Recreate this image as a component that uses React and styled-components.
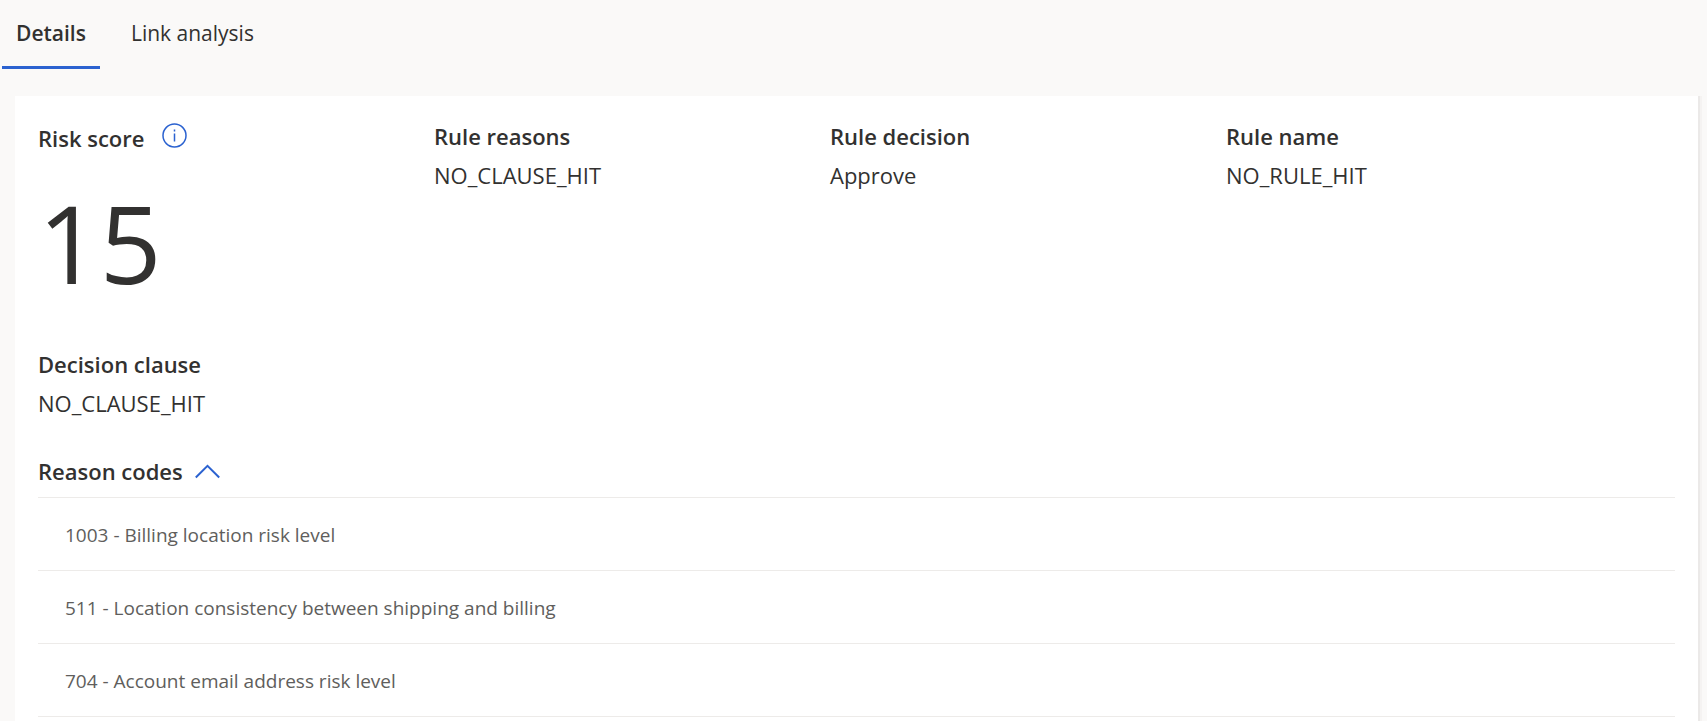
import styled, {createGlobalStyle} from "styled-components";
import {useState} from "react";

const GlobalStyle = createGlobalStyle`
  *{
    box-sizing: border-box;
  }
  body{
    margin: 0;
    background-color: #faf9f8;
    color: #323130;
    font-family: "Open Sans", "Noto Sans", sans-serif;
    font-size: 22px;
    line-height: 30px;
  }
  button{
    font: inherit;
    color: inherit;
    background: none;
    border: 0;
    padding: 0;
    cursor: pointer;
  }
`;

const Page = styled.div`
  display: flex;
  flex-direction: column;
  height: 100vh;
  overflow: hidden;
`;

const Tabs = styled.div`
  display: flex;
  gap: 17px;
  padding: 0 2px;
  margin-bottom: 27px;
`;

const Tab = styled.button`
  && {
    height: 69px;
    padding: 0 14px;
    border-bottom: 3px solid ${props => props.$active ? '#2b62d0' : 'transparent'};
    font-size: 21px;
    font-weight: ${props => props.$active ? 600 : 400};
  }
`;

const Card = styled.main`
  flex: 1;
  margin: 0 9px 0 15px;
  padding: 25px 23px 0;
  background-color: #fff;
  box-shadow: 2px 0 0 #ebe9e8, 4px 0 0 #f5f3f2;
`;

const Fields = styled.div`
  display: grid;
  grid-template-columns: repeat(4, 1fr);
  row-gap: 38px;
  padding-right: 53px;
`;

const Label = styled.h2`
  margin: 0;
  font-size: 22px;
  line-height: 30px;
  font-weight: 600;
`;

const Value = styled.p`
  margin: 9px 0 0;
`;

const ScoreHead = styled.div`
  display: flex;
  align-items: flex-end;
  gap: 18px;
  height: 32px;
  button{
    height: 32px;
    padding-bottom: 4px;
  }
  svg{
    display: block;
  }
`;

const Score = styled.p`
  margin: 22px 0 0;
  font-size: 108px;
  line-height: 136px;
`;

const ReasonToggle = styled.button`
  && {
    display: flex;
    align-items: center;
    gap: 12px;
    margin-top: 38px;
    padding-bottom: 11px;
    font-weight: 600;
  }
`;

const ReasonList = styled.ul`
  list-style: none;
  margin: 0;
  padding: 0;
  border-top: 1px solid #edebe9;
`;

const Reason = styled.li`
  display: flex;
  align-items: center;
  height: 73px;
  padding: 2px 27px 0;
  border-bottom: 1px solid #edebe9;
  color: #605e5c;
  font-size: 19px;
`;

const InfoIcon = () => (
  <svg width="25" height="25" viewBox="0 0 25 25" fill="none" stroke="#2b62d0" strokeWidth="1.5">
    <circle cx="12.5" cy="12.5" r="11.5" />
    <path d="M12.5 10.5v8M12.5 6.5v2" />
  </svg>
);

const ChevronUpIcon = () => (
  <svg width="25" height="15" viewBox="0 0 25 15" fill="none" stroke="#2b62d0" strokeWidth="2">
    <path d="M.8 13.5 12.5 1.8 24.2 13.5" />
  </svg>
);

const reasons = [
  '1003 - Billing location risk level',
  '511 - Location consistency between shipping and billing',
  '704 - Account email address risk level',
];

const Field = ({label, value}) => (
  <section>
    <Label>{label}</Label>
    <Value>{value}</Value>
  </section>
);

export default function App() {
  const [tab, setTab] = useState('Details');
  const [open, setOpen] = useState(true);
  return (
    <Page>
      <GlobalStyle />
      <Tabs role="tablist">
        {['Details', 'Link analysis'].map(name => (
          <Tab
            key={name}
            role="tab"
            aria-selected={tab === name}
            $active={tab === name}
            onClick={() => setTab(name)}
          >
            {name}
          </Tab>
        ))}
      </Tabs>
      <Card>
        <Fields>
          <section>
            <ScoreHead>
              <Label>Risk score</Label>
              <button aria-label="About risk score">
                <InfoIcon />
              </button>
            </ScoreHead>
            <Score>15</Score>
          </section>
          <Field label="Rule reasons" value="NO_CLAUSE_HIT" />
          <Field label="Rule decision" value="Approve" />
          <Field label="Rule name" value="NO_RULE_HIT" />
          <Field label="Decision clause" value="NO_CLAUSE_HIT" />
        </Fields>
        <ReasonToggle aria-expanded={open} onClick={() => setOpen(!open)}>
          Reason codes
          <ChevronUpIcon />
        </ReasonToggle>
        {open && (
          <ReasonList>
            {reasons.map(reason => <Reason key={reason}>{reason}</Reason>)}
          </ReasonList>
        )}
      </Card>
    </Page>
  );
}
